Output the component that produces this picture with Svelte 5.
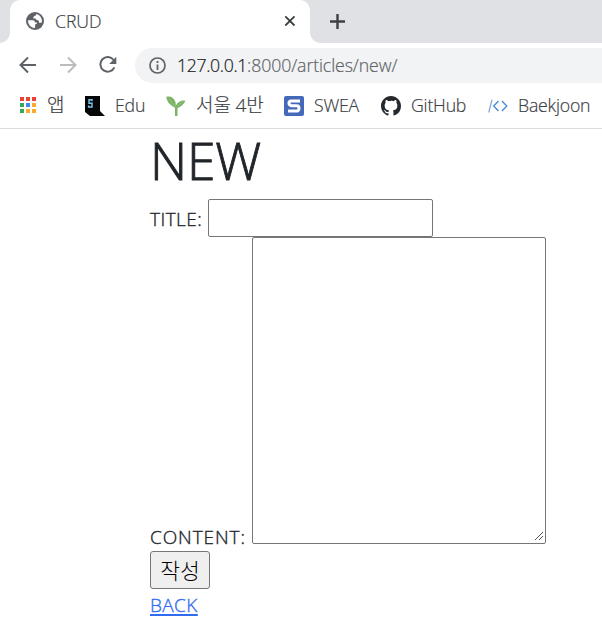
<script>
  const apps = ['#ea4335', '#ea4335', '#ea4335', '#34a853', '#4285f4', '#fbab2f', '#34a853', '#fbab2f', '#fbab2f'];
</script>

<div class="window">
  <header>
    <div class="tabs">
      <div class="tab">
        <svg class="globe" width="18" height="18" viewBox="0 0 18 18"><circle cx="9" cy="9" r="9" fill="#5f6368" /><path d="M2 8.3H6.6Q9 8.4 9 10.4H11Q11.6 12 9.1 12.4V15.9A7 7 0 0 1 2 8.3M10.3 2.1Q10.3 4.1 8 4.3 7.2 5 7.4 6.4H9.7Q10 8.4 12.2 8.3 13.1 8.8 13 10.8H15.7A7 7 0 0 0 10.3 2.1Z" fill="#fff" /></svg>
        <span class="tabname">CRUD</span>
        <svg class="close" width="12" height="12" viewBox="0 0 12 12"><path d="m1.3 1.3 9.2 9.2m0-9.2-9.2 9.2" stroke="#3c4043" stroke-width="1.8" /></svg>
      </div>
      <svg class="plus" width="16" height="16" viewBox="0 0 16 16"><path d="M7.5 0v15M0 7.5h15" stroke="#3c4043" stroke-width="2.4" /></svg>
    </div>
    <div class="toolbar">
      <svg class="back" width="18" height="18" viewBox="0 0 18 18"><path d="M17 9H2M9 1.5 1.5 9 9 16.5" fill="none" stroke="#5f6368" stroke-width="2" /></svg>
      <svg class="forward" width="18" height="18" viewBox="0 0 18 18"><path d="M1 9h15M9 1.5 16.5 9 9 16.5" fill="none" stroke="#babcbe" stroke-width="2" /></svg>
      <svg class="reload" width="18" height="18" viewBox="0 0 18 18"><path d="M14.6 4A7.3 7.3 0 1 0 15.4 11.3" fill="none" stroke="#5f6368" stroke-width="2" /><path d="M17.3.8v7.1h-7.1Z" fill="#5f6368" /></svg>
      <div class="address">
        <svg width="17" height="17" viewBox="0 0 17 17"><circle cx="8.5" cy="8.5" r="7.5" fill="none" stroke="#5f6368" stroke-width="1.7" /><path d="M8.5 4v2M8.5 7.5V13" stroke="#5f6368" stroke-width="1.8" /></svg>
        <span class="url"><span class="host">127.0.0.1</span><span class="path">:8000/articles/new/</span></span>
      </div>
    </div>
    <nav>
      <div class="mark m-apps"><span class="apps">{#each apps as color}<i style="background:{color}"></i>{/each}</span><span class="ko">앱</span></div>
      <div class="mark m-edu"><svg width="20" height="20" viewBox="0 0 20 20"><path d="M0 0h15v15l5 5H5l-5-4Z" fill="#050608" /><path d="M7 5.2V3.7H4V7.3H7V11H3.6V9.6" fill="none" stroke="#7dc8ee" stroke-width="1.4" /></svg><span>Edu</span></div>
      <div class="mark m-seoul"><svg width="20" height="20" viewBox="0 0 20 20"><path d="M9 20V11.8C5.5 9.5 1.2 7.5.2.7Q6.8-.4 9.1 5.2 10 7.3 9.7 9.7 13.2 4 19.4 4.7 17.4 9.7 11.5 12V20Z" fill="#7cb367" /><path d="m3 3 6.7 8.7M16.5 5.8l-5.1 4.4" stroke="#a0c48d" stroke-width=".7" /></svg><span class="ko">서울 4반</span></div>
      <div class="mark m-swea"><svg width="20" height="20" viewBox="0 0 20 20"><rect width="20" height="20" rx="2" fill="#4469b9" /><path d="M16 5H7.2Q5 5 5 7.1T7.2 9.7h5.6q2.2 0 2.2 2.6T12.8 15H4" fill="none" stroke="#fff" stroke-width="3" /></svg><span>SWEA</span></div>
      <div class="mark m-git"><svg width="20" height="20" viewBox="0 0 16 16"><path fill="#24292e" d="M8 0C3.58 0 0 3.58 0 8c0 3.54 2.29 6.53 5.47 7.59.4.07.55-.17.55-.38 0-.19-.01-.82-.01-1.49-2.01.37-2.53-.49-2.69-.94-.09-.23-.48-.94-.82-1.13-.28-.15-.68-.52-.01-.53.63-.01 1.08.58 1.23.82.72 1.21 1.87.87 2.33.66.07-.52.28-.87.51-1.07-1.78-.2-3.64-.89-3.64-3.95 0-.87.31-1.59.82-2.15-.08-.2-.36-1.02.08-2.12 0 0 .67-.21 2.2.82A7.6 7.6 0 0 1 8 3.86c.68 0 1.36.09 2 .27 1.53-1.04 2.2-.82 2.2-.82.44 1.1.16 1.92.08 2.12.51.56.82 1.27.82 2.15 0 3.07-1.87 3.75-3.65 3.95.29.25.54.73.54 1.48 0 1.07-.01 1.93-.01 2.2 0 .21.15.46.55.38A8.01 8.01 0 0 0 16 8c0-4.42-3.58-8-8-8Z" /></svg><span>GitHub</span></div>
      <div class="mark m-baek"><svg width="20" height="20" viewBox="0 0 20 20"><path d="M.8 16.5 4 3.7" stroke="#79a7d8" stroke-width="1.2" /><path d="M10.5 5 5.7 10l4.8 5M14 5l4.8 5-4.8 5" fill="none" stroke="#438ace" stroke-width="1.3" /></svg><span>Baekjoon</span></div>
    </nav>
  </header>
  <main>
    <h1>NEW</h1>
    <form>
      <div class="field title-row"><label for="title">TITLE:</label><input id="title" /></div>
      <div class="field content-row"><label for="content">CONTENT:</label><div class="area"><textarea id="content"></textarea><svg width="10" height="10" viewBox="0 0 10 10" shape-rendering="crispEdges"><path d="m.5 8.5 8-8M4.5 8.5l4-4" stroke="#555" /></svg></div></div>
      <button type="button">작성</button>
    </form>
    <a href="#back">BACK</a>
  </main>
</div>

<style>
  * { box-sizing: border-box; }
  .window { width: 602px; height: 628px; overflow: hidden; background: #fff; font: 300 17.7px/24px "Open Sans", "Noto Sans CJK KR", sans-serif; color: #212529; }
  header { height: 129px; border-bottom: 1px solid #dadce0; -webkit-text-stroke: .2px; }
  svg { display: block; flex: none; }
  .tabs { display: flex; height: 43px; background: #dfe1e5; padding-left: 10px; }
  .tab { position: relative; display: flex; width: 300px; height: 43px; padding-left: 16px; background: #fff; border-radius: 10px 10px 0 0; color: #3c4043; }
  .tab::before, .tab::after { content: ""; position: absolute; bottom: 0; width: 10px; height: 10px; }
  .tab::before { left: -10px; background: radial-gradient(circle at 0 0, transparent 9.5px, #fff 10px); }
  .tab::after { right: -10px; background: radial-gradient(circle at 100% 0, transparent 9.5px, #fff 10px); }
  .globe { margin-top: 12px; }
  .tabname { margin: 9px 0 0 11px; letter-spacing: -.1px; }
  .close { margin: 15px 14px 0 auto; }
  .plus { margin: 14px 0 0 20px; }
  .toolbar { display: flex; height: 40px; padding-top: 5px; }
  .toolbar > svg { margin-top: 8px; }
  .back { margin-left: 19px; }
  .forward { margin-left: 22px; }
  .reload { margin-left: 22px; }
  .address { display: flex; flex: 1; height: 35px; margin-left: 18px; border-radius: 18px 0 0 18px; background: #f1f3f4; padding: 9px 0 0 14px; }
  .url { margin: -4px 0 0 11px; white-space: nowrap; }
  .host { color: #202124; letter-spacing: -.35px; }
  .path { color: #5f6368; letter-spacing: -.1px; }
  nav { display: flex; height: 45px; padding: 13px 0 0 20px; color: #3c4043; }
  .mark { display: flex; white-space: nowrap; flex: none; }
  .mark > span:last-child { margin: -3px 0 0 10px; letter-spacing: -.2px; }
  .mark > .ko:last-child { font-size: 19px; font-weight: 300; letter-spacing: -.1px; }
  .m-apps { width: 65px; }
  .mark.m-apps > .ko:last-child { margin-left: 11px; }
  .m-edu { width: 81px; }
  .m-seoul { width: 118px; }
  .m-swea { width: 97px; }
  .m-git { width: 107px; }
  .apps { display: grid; grid-template-columns: repeat(3, 4px); grid-auto-rows: 4px; gap: 2px; margin-top: 1px; }
  .apps i { display: block; }
  main { padding-left: 150px; }
  h1 { height: 70px; margin: 0; font-size: 51.5px; font-weight: 300; line-height: 62px; letter-spacing: -.2px; -webkit-text-stroke: .9px; }
  .field { display: flex; }
  .title-row { height: 38px; }
  label, a { font-size: 19px; font-weight: 300; letter-spacing: .4px; -webkit-text-stroke: .35px; }
  label { white-space: nowrap; letter-spacing: .9px; }
  .title-row label { width: 58px; padding-top: 8px; letter-spacing: .45px; }
  input { width: 225px; height: 38px; margin: 0; border: 1px solid #767676; border-radius: 2px; background: #fff; outline: none; }
  .content-row { height: 307px; align-items: flex-end; }
  .content-row label { width: 102px; margin-bottom: -5px; }
  .area { position: relative; width: 294px; height: 307px; }
  textarea { display: block; width: 100%; height: 100%; margin: 0; resize: none; border: 1px solid #767676; border-radius: 2px; background: #fff; outline: none; }
  .area svg { position: absolute; right: 2px; bottom: 2px; }
  button { display: block; width: 60px; height: 38px; margin: 7px 0 0; padding: 0; border: 1px solid #767676; border-radius: 3px; background: #efefef; color: #000; font: 300 21.5px/34px "Noto Sans CJK KR", sans-serif; }
  a { display: block; width: max-content; margin-top: 4px; color: #316bf2; text-decoration-thickness: 2px; text-underline-offset: 2px; }
</style>
